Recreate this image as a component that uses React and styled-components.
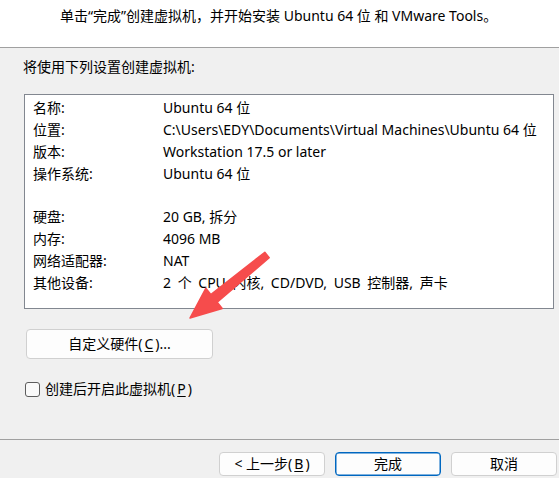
import React from "react";
import styled, { createGlobalStyle } from "styled-components";

const Global = createGlobalStyle`
  html, body { margin: 0; padding: 0; height: 100%; overflow: hidden; }
  body { background: #f0f0f0; }
  #root { height: 100%; }
  * { box-sizing: border-box; }
`;

const FONT = `"Noto Sans", "Noto Sans CJK SC", sans-serif`;

const Page = styled.div`
  position: relative;
  width: 559px;
  height: 478px;
  display: flex;
  flex-direction: column;
  background: #f0f0f0;
  font-family: ${FONT};
  font-size: 14px;
  color: #000;
`;

const Header = styled.div`
  height: 48px;
  background: #fff;
  border-bottom: 1px solid #a0a0a0;
  padding: 6px 0 0 60px;
  line-height: 20px;
  white-space: nowrap;
`;

const Main = styled.div`
  flex: 1;
  display: flex;
  flex-direction: column;
  align-items: flex-start;
  padding: 0 0 0 23px;
`;

const Title = styled.div`
  margin-top: 9px;
  line-height: 20px;
`;

const SummaryBox = styled.div`
  margin: 17px 0 0 1px;
  width: 530px;
  height: 215px;
  background: #fff;
  border: 1px solid #828790;
  padding: 2px 8px 0 8px;
  display: grid;
  grid-template-columns: 130px 1fr;
  grid-auto-rows: 21.875px;
  align-items: center;
  white-space: nowrap;
`;

const Cell = styled.div`
  line-height: 21.875px;
  word-spacing: ${(p) => p.$spread || 0}px;
`;

const Mnemonic = styled.u`
  margin: 0 2px;
  text-underline-offset: 2px;
`;

const PushButton = styled.button`
  font-family: ${FONT};
  font-size: 14px;
  color: #000;
  background: #fdfdfd;
  border: 1px solid ${(p) => (p.$primary ? "#0067c0" : "#d0d0d0")};
  box-shadow: ${(p) => (p.$primary ? "inset 0 0 0 0.5px #0067c0" : "none")};
  border-radius: 4px;
  padding: 0;
  width: ${(p) => p.$w}px;
  height: ${(p) => p.$h}px;
  display: flex;
  align-items: center;
  justify-content: center;
  line-height: 20px;
`;

const HardwareButton = styled(PushButton)`
  margin: 20px 0 0 3px;
`;

const CheckRow = styled.label`
  display: flex;
  align-items: center;
  gap: 5px;
  margin: 20px 0 0 2px;
  height: 20px;
  line-height: 20px;
`;

const CheckBox = styled.span`
  width: 15px;
  height: 15px;
  border: 1px solid #5c5c5c;
  border-radius: 3px;
  background: #f9f9f9;
`;

const Footer = styled.div`
  height: 39px;
  border-top: 1px solid #a0a0a0;
  display: flex;
  justify-content: flex-end;
  align-items: flex-start;
  gap: 10px;
  padding: 12px 2px 0 0;
`;

const ArrowSvg = styled.svg`
  position: absolute;
  left: 185px;
  top: 250px;
  pointer-events: none;
`;

const rows = [
  ["名称:", "Ubuntu 64 位"],
  ["位置:", "C:\\Users\\EDY\\Documents\\Virtual Machines\\Ubuntu 64 位"],
  ["版本:", "Workstation 17.5 or later"],
  ["操作系统:", "Ubuntu 64 位"],
  ["", ""],
  ["硬盘:", "20 GB, 拆分"],
  ["内存:", "4096 MB"],
  ["网络适配器:", "NAT"],
  ["其他设备:", "2 个 CPU 内核, CD/DVD, USB 控制器, 声卡", 3],
];

export default function App() {
  return (
    <>
      <Global />
      <Page>
        <Header>单击“完成”创建虚拟机，并开始安装 Ubuntu 64 位 和 VMware Tools。</Header>
        <Main>
          <Title>将使用下列设置创建虚拟机:</Title>
          <SummaryBox>
            {rows.map(([k, v, spread], i) => (
              <React.Fragment key={i}>
                <Cell>{k}</Cell>
                <Cell $spread={spread}>{v}</Cell>
              </React.Fragment>
            ))}
          </SummaryBox>
          <HardwareButton $w={187} $h={30}>
            <span>
              自定义硬件(<Mnemonic>C</Mnemonic>)...
            </span>
          </HardwareButton>
          <CheckRow>
            <CheckBox />
            <span>
              创建后开启此虚拟机(<Mnemonic>P</Mnemonic>)
            </span>
          </CheckRow>
        </Main>
        <Footer>
          <PushButton $w={106} $h={24}>
            <span>
              &lt; 上一步(<Mnemonic>B</Mnemonic>)
            </span>
          </PushButton>
          <PushButton $w={106} $h={24} $primary>
            完成
          </PushButton>
          <PushButton $w={106} $h={24}>
            取消
          </PushButton>
        </Footer>
        <ArrowSvg width="90" height="75" viewBox="0 0 90 75">
          <polygon
            points="79.8,2.3 25.8,44.5 20.8,38.3 5,68 37.2,58.5 32.2,52.3 84.2,7.7"
            fill="#f64c4c"
            stroke="#f64c4c"
            strokeWidth="1.5"
            strokeLinejoin="round"
          />
        </ArrowSvg>
      </Page>
    </>
  );
}
